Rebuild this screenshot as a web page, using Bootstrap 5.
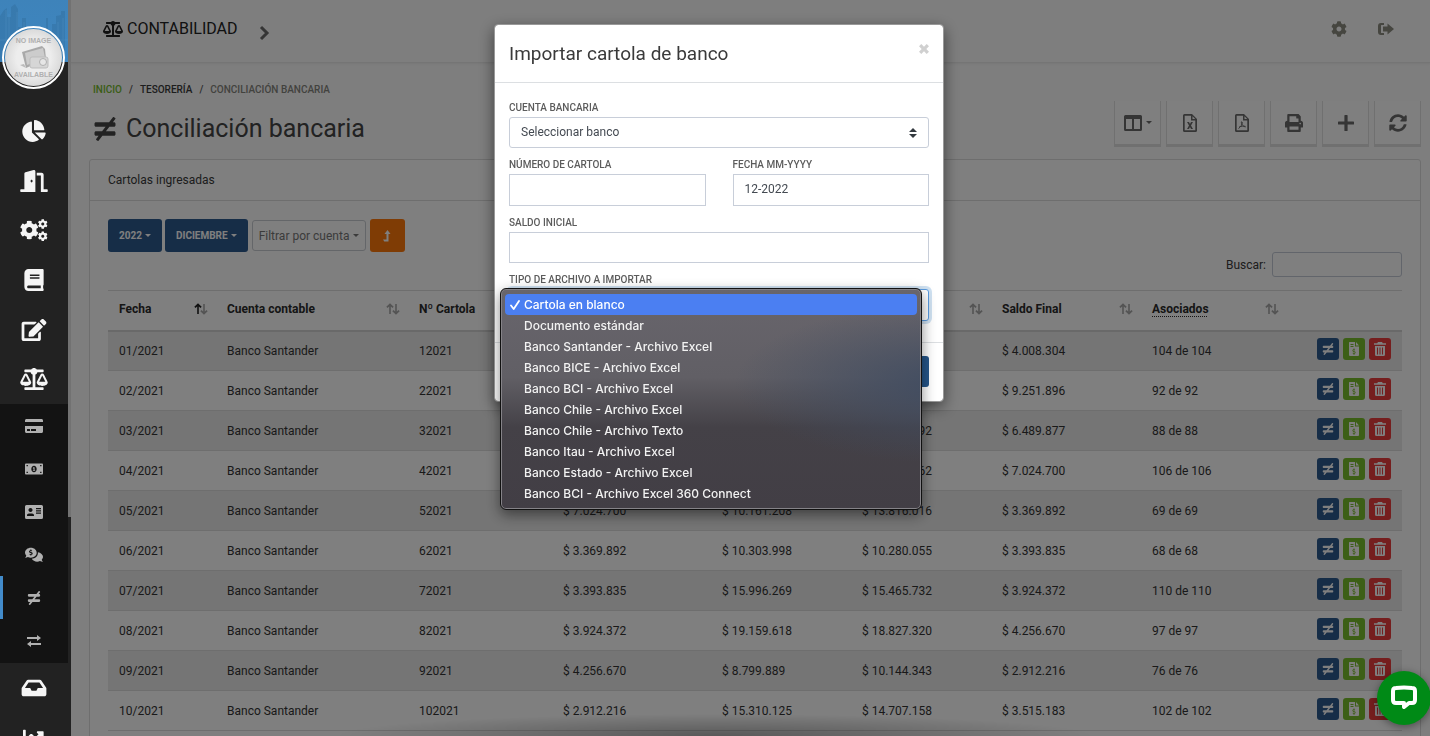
<!DOCTYPE html>
<html lang="es">
<head>
<meta charset="utf-8">
<meta name="viewport" content="width=device-width, initial-scale=1">
<title>Conciliación bancaria</title>
<link href="https://cdn.jsdelivr.net/npm/bootstrap@5.3.0/dist/css/bootstrap.min.css" rel="stylesheet">
<style>
:root{--navy:#2d5b8f;--ink:#3a3a3a;--line:#dcdcdc}
body{font-family:Roboto,"Liberation Sans",sans-serif;font-size:12px;color:var(--ink);background:#fcfcfc;overflow:hidden;height:100vh}
svg{display:block;fill:currentColor;flex:none}
.i12{width:12px;height:12px}.i14{width:14px;height:14px}.i16{width:16px;height:16px}.i18{width:18px;height:18px}.i20{width:20px;height:20px}.i24{width:24px;height:24px}.i28{width:28px;height:22px}

/* Sidebar */
.side{width:71px;z-index:1060;background:linear-gradient(#727272 0 517px,#222 517px) right/3px 100% no-repeat #222;color:#fff;position:relative;overflow:hidden}
.side-in{width:68px}
.brand{height:106px}
.brand svg.city{width:68px;height:62px}
.avatar{position:absolute;left:2px;top:26px;width:63px;height:63px}
.side a{color:#f5f5f5;height:50px;padding-right:1px}
.side .main-items{height:298px}
.side .main-items a{height:auto;flex:1}
.sub{background:#131313;padding-bottom:1px}
.sub a{color:#b0b0b0;height:43px;border-left:3px solid transparent;padding-right:4px}
.sub a.active{border-color:#428bca}

/* Top bar and heading */
.topbar{height:63px;border-bottom:1px solid #eaeaea;box-shadow:0 1px 2px #eee;padding:0 36px 0 32px;color:#222}
.topbar .h-app{font-size:16px}
.topbar .go-next{margin:4px 0 0 20px}
.topbar a{color:#8c8c80}
.topbar nav{gap:31px}
.crumbs{font-size:10px;line-height:14px;font-weight:500;--bs-breadcrumb-divider-color:#555}
.crumbs a{color:#74bb2c}
.crumbs .active{color:#85857c}
.crumbs .breadcrumb-item+.breadcrumb-item{padding-left:7px}
.crumbs .breadcrumb-item+.breadcrumb-item::before{padding-right:7px}
.page-body{padding:20px 9px 0 18px}
.title{font-size:25px;line-height:32px;color:#444;gap:9px}
.tools{gap:5px;padding-top:18px}
.tool{width:47px;height:46px;background:#fff;border:solid #e0e0e0;border-width:0 1px 3px;border-radius:0;color:#6a6a6a;padding:0}
.caret{display:inline-block;border:solid transparent;border-width:3px 3px 0;border-top-color:currentColor}
.panel{border:1px solid var(--line);border-radius:3px;background:#fff;margin-top:12px}
.panel-top{height:41px;padding:0 18px;border-bottom:1px solid var(--line)}
.panel-in{padding:18px}
.filters{gap:3px}
.f-btn{height:33px;background:var(--navy);color:#fff;font-size:10px;font-weight:700;border-radius:3px;padding:0 10px;gap:3px}
.f-btn.go{background:#ff780a;width:35px;padding:0}
.f-sel{height:31px;width:114px;border:1px solid #c9ccd2;border-radius:3px;background:#fff;color:#777;padding:0 6px;font-size:12px;margin:0 1px}
.search{gap:6px}
.search input{width:130px;height:25px;border:1px solid #c4cad6;border-radius:3px;background:#fff}

/* Statement list */
.grid{table-layout:fixed;width:100%;margin-top:13px;border-top:1px solid var(--line);color:#333}
.grid th{height:40px;padding:0 8px 2px 11px;font-weight:700;color:#2b2b2b}
.grid thead{border-bottom:2px solid #d2d2d2}
.grid td{height:40px;padding:0 11px;border-bottom:1px solid var(--line)}
.grid tbody tr:nth-child(odd){background:#ebebeb}
.grid td:last-child{padding-bottom:4px}
.grid abbr{text-decoration:underline dotted;text-underline-offset:3px}
.acts{gap:4px}
.act{width:22px;height:22px;border-radius:3px;color:#fff;padding:0;border:0;background:var(--navy)}
.act.ok{background:#79bf2d}.act.del{background:#ea3d3d}

/* Chat launcher */
.chat{position:fixed;right:-1px;bottom:11px;width:54px;height:54px;border:0;border-radius:50%;background:#008a16;color:#fff;z-index:1070;box-shadow:0 2px 8px #0006}

/* Import dialog */
.shade{opacity:1;background:radial-gradient(closest-side,#0000004d,#0000) 50% calc(100% + 22px)/760px 44px no-repeat,#00000080}
.modal{padding-left:8px}
.modal-dialog{width:450px;max-width:100%;margin:24px auto 0}
.modal-content{border:1px solid #999;border-radius:4px;box-shadow:0 5px 15px #00000080}
.modal-header{padding:15px 14px 13px;height:58px;border-color:#dcdfe2;border-radius:0}
.modal-title{font-size:19px;line-height:28px;color:#3a3a3a}
.x{border:0;background:none;color:#d0d0d0;padding:0}
.modal-body{padding:18px 14px 21px}
.modal-body label{font-size:10px;line-height:14px;font-weight:500;color:#5c5c5c;margin-bottom:2px;display:block}
.modal-body .field{margin-bottom:10px}
.modal-body .form-control,.modal-body .form-select{height:32px;font-size:12px;line-height:16px;color:#444a52;padding:0 11px 2px;border:1px solid #c8ced9;border-radius:0}
.modal-body .form-select{height:31px;border-radius:3px;background-image:url("data:image/svg+xml,%3csvg xmlns='http://www.w3.org/2000/svg' viewBox='0 0 4 5'%3e%3cpath fill='%23343a40' d='M2 0L0 2h4zm0 5L0 3h4z'/%3e%3c/svg%3e");background-size:8px 10px;background-position:right 11px center}
.modal-body .form-control.short{height:31px}
.modal-body .form-select.type{border-color:#5a9be0;box-shadow:0 0 0 3px #428bca40;height:32px;color:#fff}
.two{gap:27px}
.modal-footer{padding:13px 14px 14px;border-color:#dcdfe2}
.send{height:31px;background:#25568a;color:#fff;border-radius:3px;font-size:11px;padding:0 16px;margin:0}

/* Open option list of the file type select */
.picker{position:absolute;left:5px;top:263px;width:422px;border:1px solid #111;border-radius:6px;padding:5px 4px;box-shadow:inset 0 0 0 1px #858388,0 5px 14px #0007;background:radial-gradient(ellipse 220px 80px at 108% 43%,#404c61,#404c6100),linear-gradient(#68656c,#615f65 40%,#444147 63%,#423e45)}
.picker button{font:500 12px/21px Inter,"Liberation Sans",sans-serif;color:#f2f2f2;padding:0 5px;border:0;border-radius:4px;height:21px}
.picker button.on,.picker button:hover{background:#4b7ff2;color:#fff}
.tick{width:14px}
</style>
</head>
<body class="d-flex">
<svg class="d-none">
<symbol id="pie" viewBox="0 0 544 512"><path d="M527.79 288H290.5l158.03 158.03c6.04 6.04 15.98 6.53 22.19.68 38.7-36.46 65.32-85.61 73.13-140.86 1.34-9.46-6.51-17.85-16.06-17.85zm-15.83-64.8C503.72 103.74 408.26 8.28 288.8.04 279.68-.59 272 7.1 272 16.24V240h223.77c9.14 0 16.82-7.68 16.19-16.8zM224 288V50.71c0-9.55-8.39-17.4-17.84-16.06C86.99 51.49-4.1 155.6.14 280.37 4.5 408.51 114.83 513.59 243.03 511.98c50.4-.63 96.97-16.87 135.26-44.03 7.9-5.6 8.42-17.23 1.57-24.08L224 288z"/></symbol>
<symbol id="door" viewBox="0 0 640 512"><path d="M624 448h-80V113.45C544 86.19 522.47 64 496 64H384v64h96v384h144c8.84 0 16-7.16 16-16v-32c0-8.84-7.16-16-16-16zM312.24 1.01l-192 49.74C105.99 54.44 96 67.7 96 82.92V448H16c-8.84 0-16 7.16-16 16v32c0 8.84 7.16 16 16 16h336V33.18c0-21.58-19.56-37.41-39.76-32.17zM264 288c-13.25 0-24-14.33-24-32s10.75-32 24-32 24 14.33 24 32-10.75 32-24 32z"/></symbol>
<symbol id="cog" viewBox="0 0 512 512"><path d="M487.4 315.7l-42.6-24.6c4.3-23.2 4.3-47 0-70.2l42.6-24.6c4.9-2.8 7.1-8.6 5.5-14-11.1-35.6-30-67.8-54.7-94.6-3.8-4.1-10-5.1-14.8-2.3L380.8 110c-17.9-15.4-38.5-27.3-60.8-35.1V25.8c0-5.6-3.9-10.5-9.4-11.7-36.7-8.2-74.3-7.8-109.2 0-5.5 1.2-9.4 6.1-9.4 11.7V75c-22.2 7.9-42.8 19.8-60.8 35.1L88.7 85.5c-4.9-2.8-11-1.9-14.8 2.3-24.7 26.7-43.6 58.9-54.7 94.6-1.7 5.4.6 11.2 5.5 14L67.3 221c-4.3 23.2-4.3 47 0 70.2l-42.6 24.6c-4.9 2.8-7.1 8.6-5.5 14 11.1 35.6 30 67.8 54.7 94.6 3.8 4.1 10 5.1 14.8 2.3l42.6-24.6c17.9 15.4 38.5 27.3 60.8 35.1v49.2c0 5.6 3.9 10.5 9.4 11.7 36.7 8.2 74.3 7.8 109.2 0 5.5-1.2 9.4-6.1 9.4-11.7v-49.2c22.2-7.9 42.8-19.8 60.8-35.1l42.6 24.6c4.9 2.8 11 1.9 14.8-2.3 24.7-26.7 43.6-58.9 54.7-94.6 1.5-5.5-.7-11.3-5.6-14.1zM256 336c-44.1 0-80-35.9-80-80s35.9-80 80-80 80 35.9 80 80-35.9 80-80 80z"/></symbol>
<symbol id="cogs" viewBox="0 0 640 512"><use href="#cog" x="-14" y="32" width="448" height="448"/><use href="#cog" x="408" y="0" width="232" height="232"/><use href="#cog" x="408" y="284" width="232" height="232"/></symbol>
<symbol id="book" viewBox="0 0 448 512"><path d="M448 360V24c0-13.3-10.7-24-24-24H96C43 0 0 43 0 96v320c0 53 43 96 96 96h328c13.3 0 24-10.7 24-24v-16c0-7.5-3.5-14.3-8.9-18.7-4.2-15.4-4.2-59.3 0-74.7 5.4-4.3 8.9-11.1 8.9-18.6zM128 134c0-3.3 2.7-6 6-6h212c3.3 0 6 2.7 6 6v20c0 3.3-2.7 6-6 6H134c-3.3 0-6-2.7-6-6v-20zm0 64c0-3.3 2.7-6 6-6h212c3.3 0 6 2.7 6 6v20c0 3.3-2.7 6-6 6H134c-3.3 0-6-2.7-6-6v-20zm253.4 250H96c-17.7 0-32-14.3-32-32 0-17.6 14.4-32 32-32h285.4c-1.9 17.1-1.9 46.9 0 64z"/></symbol>
<symbol id="edit" viewBox="0 0 576 512"><path d="M402.6 83.2l90.2 90.2c3.8 3.8 3.8 10 0 13.8L274.4 405.6l-92.8 10.3c-12.4 1.4-22.9-9.1-21.5-21.5l10.3-92.8L388.8 83.2c3.8-3.8 10-3.8 13.8 0zm162-22.9l-48.8-48.8c-15.2-15.2-39.9-15.2-55.2 0l-35.4 35.4c-3.8 3.8-3.8 10 0 13.8l90.2 90.2c3.8 3.8 10 3.8 13.8 0l35.4-35.4c15.2-15.3 15.2-40 0-55.2zM384 346.2V448H64V128h229.8c3.2 0 6.2-1.3 8.5-3.5l40-40c7.6-7.6 2.2-20.5-8.5-20.5H48C21.5 64 0 85.5 0 112v352c0 26.5 21.5 48 48 48h352c26.5 0 48-21.5 48-48V306.2c0-10.7-12.9-16-20.5-8.5l-40 40c-2.2 2.3-3.5 5.3-3.5 8.5z"/></symbol>
<symbol id="scale" viewBox="0 0 640 512"><path d="M256 336h-.02c0-16.18 1.34-8.73-85.05-181.51-17.65-35.29-68.19-35.36-85.87 0C-2.06 328.75.02 320.33.02 336H0c0 44.18 57.31 80 128 80s128-35.82 128-80zM128 176l72 144H56l72-144zm511.98 160c0-16.18 1.34-8.73-85.05-181.51-17.65-35.29-68.19-35.36-85.87 0-87.12 174.26-85.04 165.84-85.04 181.51H384c0 44.18 57.31 80 128 80s128-35.82 128-80h-.02zM440 320l72-144 72 144H440zm88 128H352V153.25c23.51-10.29 41.16-31.48 46.39-57.25H528c8.84 0 16-7.16 16-16V48c0-8.84-7.16-16-16-16H383.64C369.04 12.68 346.09 0 320 0s-49.04 12.68-63.64 32H112c-8.84 0-16 7.16-16 16v32c0 8.84 7.16 16 16 16h129.61c5.23 25.76 22.87 46.96 46.39 57.25V448H112c-8.84 0-16 7.16-16 16v32c0 8.84 7.16 16 16 16h416c8.84 0 16-7.16 16-16v-32c0-8.84-7.16-16-16-16z"/></symbol>
<symbol id="credit" viewBox="0 0 576 512"><path d="M0 432c0 26.5 21.5 48 48 48h480c26.5 0 48-21.5 48-48V256H0v176zm192-68c0-6.6 5.4-12 12-12h136c6.6 0 12 5.4 12 12v40c0 6.6-5.4 12-12 12H204c-6.6 0-12-5.4-12-12v-40zm-128 0c0-6.6 5.4-12 12-12h72c6.6 0 12 5.4 12 12v40c0 6.6-5.4 12-12 12H76c-6.6 0-12-5.4-12-12v-40zM576 80v48H0V80c0-26.5 21.5-48 48-48h480c26.5 0 48 21.5 48 48z"/></symbol>
<symbol id="bill" viewBox="0 0 640 512"><path fill-rule="evenodd" d="M30 64h580a30 30 0 0 1 30 30v324a30 30 0 0 1-30 30H30a30 30 0 0 1-30-30V94a30 30 0 0 1 30-30zM320 144c-53 0-96 50-96 112s43 112 96 112 96-50 96-112-43-112-96-112zM54 112v48h48v-48zM538 112v48h48v-48zM54 352v48h48v-48zM538 352v48h48v-48z"/><path d="M304 192h36v96h20v32h-80v-32h24v-54l-24 6v-30z"/></symbol>
<symbol id="idcard" viewBox="0 0 576 512"><path fill-rule="evenodd" d="M48 32h480a48 48 0 0 1 48 48v352a48 48 0 0 1-48 48H48a48 48 0 0 1-48-48V80a48 48 0 0 1 48-48zM176 128a64 64 0 1 0 .1 0zM64 384h224v-20c0-38-32-60-60-60H124c-30 0-60 22-60 60zM352 128v36h160v-36zM352 200v36h160v-36zM352 272v36h160v-36z"/></symbol>
<symbol id="talk" viewBox="0 0 640 512"><path fill-rule="evenodd" d="M208 0c115 0 208 78 208 176s-93 176-208 176c-38 0-74-9-105-24-22 14-56 24-103 24 24-20 42-48 46-76C17 248 0 213 0 176 0 78 93 0 208 0zM190 62v26c-60 6-66 78-10 94l40 14c18 8 12 24-6 24-16 0-26-2-38-10l-20 26c12 8 22 12 34 14v28h36v-28c58-6 66-78 12-96l-44-14c-16-8-10-22 8-22 14 0 22 2 34 10l20-26c-10-8-20-12-30-14V62z"/><path d="M458 160c104 16 182 84 182 162 0 38-18 72-46 100 6 28 22 50 46 74-46 0-82-10-108-26-30 16-64 24-100 24-84 0-156-42-190-104 120-2 216-92 216-194 0-14 0-24 0-36z"/></symbol>
<symbol id="neq" viewBox="0 0 448 512"><path d="M416 208c17.67 0 32-14.33 32-32v-32c0-17.67-14.33-32-32-32h-23.88l51.87-66.81c5.37-7.02 4.04-17.06-2.97-22.43L415.61 3.3c-7.02-5.38-17.06-4.04-22.44 2.97L311.09 112H32c-17.67 0-32 14.33-32 32v32c0 17.67 14.33 32 32 32h204.56l-74.53 96H32c-17.67 0-32 14.33-32 32v32c0 17.67 14.33 32 32 32h55.49l-51.87 66.81c-5.37 7.01-4.04 17.05 2.97 22.43L64 508.7c7.02 5.38 17.06 4.04 22.43-2.97L168.52 400H416c17.67 0 32-14.33 32-32v-32c0-17.67-14.33-32-32-32H243.05l74.53-96H416z"/></symbol>
<symbol id="swap" viewBox="0 0 16 12"><path d="M1 2h10V0l4 3-4 3V4H1zM15 8H5V6L1 9l4 3v-2h10z"/></symbol>
<symbol id="inbox" viewBox="0 0 576 512"><path d="M567.938 243.908L462.25 85.374A48.003 48.003 0 0 0 422.311 64H153.689a48 48 0 0 0-39.938 21.374L8.062 243.908A47.994 47.994 0 0 0 0 270.533V400c0 26.51 21.49 48 48 48h480c26.51 0 48-21.49 48-48V270.533a47.994 47.994 0 0 0-8.062-26.625zM162.252 128h251.497l85.333 128H376l-32 64H232l-32-64H76.918l85.334-128z"/></symbol>
<symbol id="chart" viewBox="0 0 512 512"><path d="M496 384H64V80c0-9-7-16-16-16H16C7 64 0 71 0 80v336c0 18 14 32 32 32h464c9 0 16-7 16-16v-32c0-9-7-16-16-16zM464 96H346c-22 0-32 26-17 41l32 32-73 74-73-74c-13-12-33-12-46 0l-64 64c-6 7-6 17 0 23l23 23c6 6 16 6 23 0l41-42 73 74c13 12 33 12 46 0l96-97 32 32c15 15 41 5 41-17V112c0-9-7-16-16-16z"/></symbol>
<symbol id="out" viewBox="0 0 16 14"><path d="M6 1v2H3.500a.5.500 0 0 0-.5.500v7a.5.500 0 0 0 .5.500H6v2H3a3 3 0 0 1-3-3V4a3 3 0 0 1 3-3zM9.500 1.500 16 7l-6.500 5.500V9.500H5v-5h4.500z"/></symbol>
<symbol id="cols" viewBox="0 0 18 16"><path fill-rule="evenodd" d="M1.500 0h15A1.500 1.500 0 0 1 18 1.500v13a1.500 1.500 0 0 1-1.500 1.500h-15A1.500 1.500 0 0 1 0 14.500v-13A1.500 1.500 0 0 1 1.500 0zM2 4v10h6V4zM10 4v10h6V4z"/></symbol>
<symbol id="sheet" viewBox="0 0 14 18"><path fill-rule="evenodd" d="M1.500 0H9l5 5v11.500a1.500 1.500 0 0 1-1.500 1.500h-11A1.500 1.500 0 0 1 0 16.500v-15A1.500 1.500 0 0 1 1.500 0zM1.700 1.700v14.600h10.600V6.500H8V1.700zM9.500 2.200V5h2.700z"/></symbol>
<symbol id="xls" viewBox="0 0 14 18"><use href="#sheet"/><path d="M4 8h2l1 2 1-2h2l-2 3.500 2 3.500H8l-1-2-1 2H4l2-3.500z"/></symbol>
<symbol id="pdf" viewBox="0 0 14 18"><use href="#sheet"/><path fill="none" stroke="currentColor" d="M6.500 7.500c-.5 1.500.5 4.500 4 5.500M7.200 8c.5 2-1.500 5-3.700 6.500M4 13.200c2-1.200 4.500-1.300 6.500-.8"/></symbol>
<symbol id="print" viewBox="0 0 512 512"><path d="M448 192V77.250c0-8.490-3.370-16.620-9.370-22.630L393.370 9.370c-6-6-14.140-9.370-22.630-9.370H96C78.330 0 64 14.330 64 32v160c-35.350 0-64 28.650-64 64v112c0 8.840 7.160 16 16 16h48v96c0 17.670 14.330 32 32 32h320c17.670 0 32-14.330 32-32v-96h48c8.840 0 16-7.160 16-16V256c0-35.350-28.650-64-64-64zm-64 256H128v-96h256v96zm0-224H128V64h192v48c0 8.840 7.160 16 16 16h48v96zm48 72c-13.250 0-24-10.750-24-24 0-13.260 10.750-24 24-24s24 10.740 24 24c0 13.250-10.750 24-24 24z"/></symbol>
<symbol id="plus" viewBox="0 0 16 16"><path d="M7 0h2q.6 0 .6.600v5.800h5.800q.6 0 .6.600v2q0 .6-.6.600H9.600v5.800q0 .6-.6.600H7q-.6 0-.6-.6V9.600H.6Q0 9.600 0 9V7q0-.6.600-.6h5.800V.6Q6.400 0 7 0z"/></symbol>
<symbol id="sync" viewBox="0 0 512 512"><path d="M370.72 133.28C339.458 104.008 298.888 87.962 255.848 88c-77.458.068-144.328 53.178-162.791 126.85-1.344 5.363-6.122 9.15-11.651 9.15H24.103c-7.498 0-13.194-6.807-11.807-14.176C33.933 94.924 134.813 8 256 8c66.448 0 126.791 26.136 171.315 68.685L463.03 40.97C478.149 25.851 504 36.559 504 57.941V192c0 13.255-10.745 24-24 24H345.941c-21.382 0-32.09-25.851-16.971-40.971l41.75-41.749zM32 296h134.059c21.382 0 32.09 25.851 16.971 40.971l-41.75 41.75c31.262 29.273 71.835 45.319 114.876 45.28 77.418-.07 144.315-53.144 162.787-126.849 1.344-5.363 6.122-9.15 11.651-9.15h57.304c7.498 0 13.194 6.807 11.807 14.176C478.067 417.076 377.187 504 256 504c-66.448 0-126.791-26.136-171.315-68.685L48.97 471.03C33.851 486.149 8 475.441 8 454.059V320c0-13.255 10.745-24 24-24z"/></symbol>
<symbol id="invoice" viewBox="0 0 12 14"><path fill-rule="evenodd" d="M1.500 0H7v4.500h4V13q0 1-1 1H2q-1 0-1-1V.5zM2.500 2v1h3V2zM2.500 4v1h3V4zM8 0l3 3.500H8zM5.500 6.500v.8C4 7.700 4 9.500 5.500 9.900l1 .3c.5.300.3.700-.3.700L5 10.500l-.5.800 1 .5v.9h1v-.9c1.500-.4 1.500-2.200 0-2.600l-1-.3c-.5-.3-.3-.7.300-.7l.9.300.5-.8-.7-.3v-.9z"/></symbol>
<symbol id="trash" viewBox="0 0 12 14"><path fill-rule="evenodd" d="M4 0h4l.8 1.200H12v1.600H0V1.200h3.200zM1 4h10v8.500q0 1.500-1.500 1.500h-7Q1 14 1 12.500zM3 5.500v7h1v-7zM5.500 5.500v7h1v-7zM8 5.500v7h1v-7z"/></symbol>
<symbol id="times" viewBox="0 0 10 10"><path d="M2.300 0 5 2.700 7.700 0 10 2.300 7.300 5 10 7.700 7.700 10 5 7.300 2.300 10 0 7.700 2.700 5 0 2.300z"/></symbol>
</svg>

<aside class="side flex-shrink-0">
 <div class="side-in">
  <div class="brand">
   <svg class="city" viewBox="0 0 68 62" aria-hidden="true"><defs><linearGradient id="sky" x2="0" y2="1"><stop stop-color="#3e83ba"/><stop offset="1" stop-color="#3d86c1"/></linearGradient></defs><path fill="url(#sky)" d="M0 0h68v62H0z"/><path fill="#2f6894" opacity=".35" d="M0 16l4-6 3-2v9h4V7l4-3 3 5v18h4v-9h4v14h8v-3h4v4h8V18h2v14h4v-8h4v-8l5-1v-4h4v51H0z"/><path stroke="#5b9bcb" opacity=".3" d="M6 10v30M9 14v26M17 12v24M24 22v14M58 22v34M63 18v36M0 40h68"/></svg>
   <svg class="avatar" viewBox="0 0 63 63" role="img" aria-label="No image available"><defs><radialGradient id="disc"><stop offset=".6" stop-color="#ededed"/><stop offset="1" stop-color="#dadada"/></radialGradient></defs><circle cx="31.500" cy="31.500" r="30.500" fill="none" stroke="#fff" stroke-width="2"/><circle cx="31.500" cy="31.500" r="28.500" fill="url(#disc)"/><g font-family="Liberation Sans" font-weight="bold" font-size="7" fill="#b0b0b0" text-anchor="middle"><text x="31.500" y="17">NO IMAGE</text><text x="31.500" y="51">AVAILABLE</text></g><path fill="#a9a9a9" d="M20 26l20-6 3 3 1 10-20 9z"/><path fill="#ccc" d="M23 27l18-5 2 10-18 7z"/><path fill="#bbb" d="M18 39l4-1 2 4z"/><rect x="28" y="31" width="18" height="11" rx="2" fill="#d6d6d6" stroke="#bdbdbd"/><circle cx="41" cy="36" r="3.500" fill="#e6e6e6" stroke="#b0b0b0"/></svg>
  </div>
  <nav aria-label="Principal">
   <div class="main-items d-flex flex-column">
   <a class="d-flex align-items-center justify-content-center" href="#" aria-label="Panel"><svg class="i28"><use href="#pie"/></svg></a>
   <a class="d-flex align-items-center justify-content-center" href="#" aria-label="Accesos"><svg class="i28"><use href="#door"/></svg></a>
   <a class="d-flex align-items-center justify-content-center" href="#" aria-label="Configuración"><svg class="i28"><use href="#cogs"/></svg></a>
   <a class="d-flex align-items-center justify-content-center" href="#" aria-label="Libros"><svg class="i28"><use href="#book"/></svg></a>
   <a class="d-flex align-items-center justify-content-center" href="#" aria-label="Edición"><svg class="i28"><use href="#edit"/></svg></a>
   <a class="d-flex align-items-center justify-content-center" href="#" aria-label="Contabilidad"><svg class="i28"><use href="#scale"/></svg></a>
   </div>
   <div class="sub">
    <a class="d-flex align-items-center justify-content-center" href="#" aria-label="Tarjetas"><svg class="i18"><use href="#credit"/></svg></a>
    <a class="d-flex align-items-center justify-content-center" href="#" aria-label="Pagos"><svg class="i18"><use href="#bill"/></svg></a>
    <a class="d-flex align-items-center justify-content-center" href="#" aria-label="Fichas"><svg class="i18"><use href="#idcard"/></svg></a>
    <a class="d-flex align-items-center justify-content-center" href="#" aria-label="Cobros"><svg class="i18"><use href="#talk"/></svg></a>
    <a class="d-flex align-items-center justify-content-center active" href="#" aria-label="Conciliación"><svg class="i14"><use href="#neq"/></svg></a>
    <a class="d-flex align-items-center justify-content-center" href="#" aria-label="Traspasos"><svg class="i16"><use href="#swap"/></svg></a>
   </div>
   <a class="d-flex align-items-center justify-content-center" href="#" aria-label="Bandeja"><svg class="i28"><use href="#inbox"/></svg></a>
   <a class="d-flex align-items-center justify-content-center" href="#" aria-label="Reportes"><svg class="i28"><use href="#chart"/></svg></a>
  </nav>
 </div>
</aside>

<main class="flex-grow-1 overflow-hidden">
 <header class="topbar d-flex align-items-center">
  <span class="h-app d-flex align-items-center gap-1 pb-1"><svg class="i20"><use href="#scale"/></svg>CONTABILIDAD</span>
  <svg class="go-next i16" viewBox="0 0 16 16"><path fill="none" stroke="#6b6b6b" stroke-width="3" d="M3 2l6 6-6 6"/></svg>
  <nav class="ms-auto d-flex pb-1" aria-label="Usuario">
   <a href="#" aria-label="Ajustes"><svg class="i16"><use href="#cog"/></svg></a>
   <a href="#" aria-label="Salir"><svg class="i16"><use href="#out"/></svg></a>
  </nav>
 </header>
 <div class="page-body">
  <div class="d-flex justify-content-between">
   <div class="ps-1">
    <nav aria-label="Ruta"><ol class="breadcrumb crumbs mb-0">
     <li class="breadcrumb-item"><a class="text-decoration-none" href="#">INICIO</a></li>
     <li class="breadcrumb-item">TESORERÍA</li>
     <li class="breadcrumb-item active">CONCILIACIÓN BANCARIA</li>
    </ol></nav>
    <h1 class="title d-flex align-items-center fw-normal mt-3 mb-0"><svg class="i24"><use href="#neq"/></svg>Conciliación bancaria</h1>
   </div>
   <div class="tools d-flex align-items-center">
    <button class="btn tool d-flex align-items-center justify-content-center gap-1" aria-label="Columnas"><svg class="i18"><use href="#cols"/></svg><span class="caret"></span></button>
    <button class="btn tool d-flex align-items-center justify-content-center" aria-label="Excel"><svg class="i18"><use href="#xls"/></svg></button>
    <button class="btn tool d-flex align-items-center justify-content-center" aria-label="PDF"><svg class="i18"><use href="#pdf"/></svg></button>
    <button class="btn tool d-flex align-items-center justify-content-center" aria-label="Imprimir"><svg class="i18"><use href="#print"/></svg></button>
    <button class="btn tool d-flex align-items-center justify-content-center" aria-label="Agregar"><svg class="i16"><use href="#plus"/></svg></button>
    <button class="btn tool d-flex align-items-center justify-content-center" aria-label="Actualizar"><svg class="i18"><use href="#sync"/></svg></button>
   </div>
  </div>
  <section class="panel">
   <div class="panel-top d-flex align-items-center">Cartolas ingresadas</div>
   <div class="panel-in">
    <div class="filters d-flex align-items-center">
     <button class="btn f-btn d-flex align-items-center">2022 <span class="caret"></span></button>
     <button class="btn f-btn d-flex align-items-center">DICIEMBRE <span class="caret"></span></button>
     <button class="btn f-sel d-flex align-items-center justify-content-between">Filtrar por cuenta <span class="caret"></span></button>
     <button class="btn f-btn go d-flex align-items-center justify-content-center" aria-label="Aplicar"><svg class="i12" viewBox="0 0 12 12"><path d="M2 9.500h3.500V4H3.500L6.500 0l3 4h-2v7.500H3.300z"/></svg></button>
    </div>
    <div class="search d-flex justify-content-end align-items-center"><label for="q">Buscar:</label><input id="q" type="search"></div>
    <table class="grid">
     <colgroup><col width="108"><col width="192"><col width="144"><col width="159"><col width="140"><col width="140"><col width="150"><col width="146"><col width="115"></colgroup>
     <thead><tr id="head"></tr></thead>
     <tbody id="rows"></tbody>
    </table>
   </div>
  </section>
 </div>
</main>

<div class="modal-backdrop shade"></div>
<div class="modal d-block" tabindex="-1" role="dialog" aria-labelledby="mt">
 <div class="modal-dialog">
  <form class="modal-content">
   <div class="modal-header align-items-start">
    <h2 class="modal-title fw-normal" id="mt">Importar cartola de banco</h2>
    <button type="button" class="x mt-1" aria-label="Cerrar"><svg width="10" height="10"><use href="#times"/></svg></button>
   </div>
   <div class="modal-body">
    <div class="field"><label for="bank">CUENTA BANCARIA</label><select id="bank" class="form-select"><option>Seleccionar banco</option></select></div>
    <div class="two d-flex">
     <div class="field flex-fill w-50"><label for="num">NÚMERO DE CARTOLA</label><input id="num" class="form-control"></div>
     <div class="field flex-fill w-50"><label for="date">FECHA MM-YYYY</label><input id="date" class="form-control" value="12-2022"></div>
    </div>
    <div class="field"><label for="bal">SALDO INICIAL</label><input id="bal" class="form-control short"></div>
    <div><label for="type">TIPO DE ARCHIVO A IMPORTAR</label><select id="type" class="form-select type"></select></div>
   </div>
   <div class="modal-footer"><button type="button" class="btn send" aria-label="Importar"><svg class="i14" viewBox="0 0 14 14"><path d="M6 10V4H3l4-4 4 4H8v6zM0 12h14v2H0z"/></svg></button></div>
   <div class="picker" id="picker"></div>
  </form>
 </div>
</div>
<button class="chat d-flex align-items-center justify-content-center" aria-label="Abrir chat"><svg width="28" height="26" viewBox="0 0 28 26"><path fill="none" stroke="#fff" stroke-width="4" stroke-linejoin="round" d="M6 3q8-1 16 0 3 0 3 3v9q0 3-3 3h-3l-5 4v-4H6q-3 0-3-3V6q0-3 3-3z"/></svg></button>

<script src="https://cdn.jsdelivr.net/npm/bootstrap@5.3.0/dist/js/bootstrap.bundle.min.js"></script>
<script>
const heads=['Fecha','Cuenta contable','Nº Cartola','Saldo Inicial','Abonos','Cargos','Saldo Final','<abbr>Asociados</abbr>'];
const arrow=i=>`<svg width="14" height="12" viewBox="0 0 14 12"><path fill="${i?'#a8a8a8':'#222'}" d="M3.200 11V3.500L1.500 5 .3 3.800 4 .3l3.700 3.500L6.500 5 4.800 3.500V11z"/><path fill="#a8a8a8" d="M9.200 1v7.500L7.500 7 6.300 8.200 10 11.700l3.700-3.500L12.500 7l-1.700 1.500V1z"/></svg>`;
document.getElementById('head').innerHTML=heads.map((h,i)=>`<th scope="col"><div class="d-flex justify-content-between align-items-center"><span>${h}</span>${arrow(i)}</div></th>`).join('')+'<th></th>';
const data=[
['3.105.220','9.412.108','8.509.024','4.008.304',104],
['4.008.304','12.640.511','7.396.919','9.251.896',92],
['9.251.896','11.208.473','13.970.492','6.489.877',88],
['6.489.877','12.301.685','11.766.862','7.024.700',106],
['7.024.700','10.161.208','13.816.016','3.369.892',69],
['3.369.892','10.303.998','10.280.055','3.393.835',68],
['3.393.835','15.996.269','15.465.732','3.924.372',110],
['3.924.372','19.159.618','18.827.320','4.256.670',97],
['4.256.670','8.799.889','10.144.343','2.912.216',76],
['2.912.216','15.310.125','14.707.158','3.515.183',102]];
document.getElementById('rows').innerHTML=data.map((r,i)=>`<tr><td>${String(i+1).padStart(2,'0')}/2021</td><td>Banco Santander</td><td>${i+1}2021</td>${r.slice(0,4).map(v=>`<td>$ ${v}</td>`).join('')}<td>${r[4]} de ${r[4]}</td><td><div class="d-flex justify-content-end acts"><button class="act d-flex align-items-center justify-content-center" aria-label="Conciliar"><svg class="i12"><use href="#neq"/></svg></button><button class="act ok d-flex align-items-center justify-content-center" aria-label="Detalle"><svg class="i14"><use href="#invoice"/></svg></button><button class="act del d-flex align-items-center justify-content-center" aria-label="Eliminar"><svg class="i14"><use href="#trash"/></svg></button></div></td></tr>`).join('');
const kinds=['Cartola en blanco','Documento estándar','Banco Santander - Archivo Excel','Banco BICE - Archivo Excel','Banco BCI - Archivo Excel','Banco Chile - Archivo Excel','Banco Chile - Archivo Texto','Banco Itau - Archivo Excel','Banco Estado - Archivo Excel','Banco BCI - Archivo Excel 360 Connect'];
document.getElementById('type').innerHTML=kinds.map(k=>`<option>${k}</option>`).join('');
document.getElementById('picker').innerHTML=kinds.map((k,i)=>`<button type="button" class="d-flex align-items-center w-100 text-start ${i?'bg-transparent':'on'}"><span class="tick">${i?'':'<svg width="10" height="10" viewBox="0 0 10 10"><path fill="none" stroke="#fff" stroke-width="1.800" stroke-linecap="round" stroke-linejoin="round" d="M1 5.500 3.700 9 9 1"/></svg>'}</span>${k}</button>`).join('');
</script>
</body>
</html>
